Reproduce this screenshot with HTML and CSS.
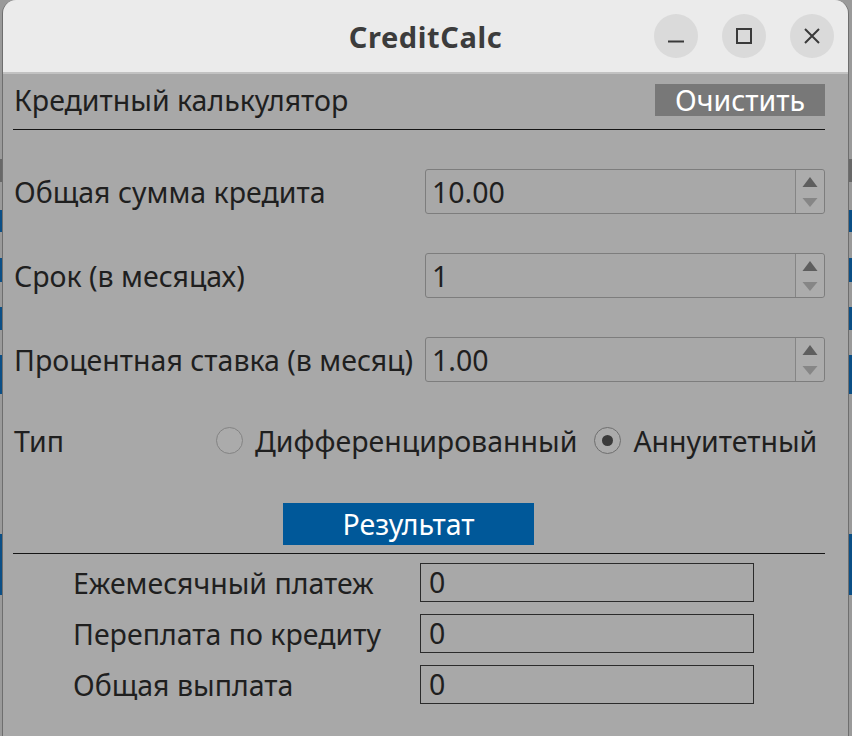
FILE: index.html
```html
<!DOCTYPE html>
<html lang="ru">
<head>
<meta charset="utf-8">
<title>CreditCalc</title>
<link rel="stylesheet" href="styles.css">
</head>
<body>
<div class="window">
  <div class="titlebar">
    <div class="title">CreditCalc</div>
    <div class="controls">
      <div class="wbtn"><svg width="44" height="44" viewBox="0 0 44 44"><line x1="14" y1="27.5" x2="30" y2="27.5" stroke="#3a3a3a" stroke-width="2"/></svg></div>
      <div class="wbtn"><svg width="44" height="44" viewBox="0 0 44 44"><rect x="15" y="15" width="14" height="14" fill="none" stroke="#3a3a3a" stroke-width="2"/></svg></div>
      <div class="wbtn"><svg width="44" height="44" viewBox="0 0 44 44"><path d="M15 15 L29 29 M29 15 L15 29" stroke="#3a3a3a" stroke-width="2" fill="none"/></svg></div>
    </div>
  </div>
  <div class="content">
    <div class="header">
      <span class="htitle">Кредитный калькулятор</span>
      <div class="clear">Очистить</div>
    </div>
    <div class="form">
      <div class="row">
        <span class="label">Общая сумма кредита</span>
        <div class="spin"><span class="val">10.00</span><div class="arrows"><svg width="28" height="43" viewBox="0 0 28 43"><polygon points="6.5,17 21.5,17 14,7" fill="#5e5e5e"/><polygon points="6.5,28 21.5,28 14,37" fill="#868686"/></svg></div></div>
      </div>
      <div class="row">
        <span class="label">Срок (в месяцах)</span>
        <div class="spin"><span class="val">1</span><div class="arrows"><svg width="28" height="43" viewBox="0 0 28 43"><polygon points="6.5,17 21.5,17 14,7" fill="#5e5e5e"/><polygon points="6.5,28 21.5,28 14,37" fill="#868686"/></svg></div></div>
      </div>
      <div class="row">
        <span class="label">Процентная ставка (в месяц)</span>
        <div class="spin"><span class="val">1.00</span><div class="arrows"><svg width="28" height="43" viewBox="0 0 28 43"><polygon points="6.5,17 21.5,17 14,7" fill="#5e5e5e"/><polygon points="6.5,28 21.5,28 14,37" fill="#868686"/></svg></div></div>
      </div>
    </div>
    <div class="typerow">
      <span class="tlabel">Тип</span>
      <span class="radio"></span><span class="rtext">Дифференцированный</span>
      <span class="radio checked"></span><span class="rtext last">Аннуитетный</span>
    </div>
    <div class="resultbar">
      <div class="result">Результат</div>
    </div>
    <div class="results">
      <div class="rrow"><span class="rlabel">Ежемесячный платеж</span><div class="field">0</div></div>
      <div class="rrow"><span class="rlabel">Переплата по кредиту</span><div class="field">0</div></div>
      <div class="rrow"><span class="rlabel">Общая выплата</span><div class="field">0</div></div>
    </div>
  </div>
</div>
</body>
</html>
```

FILE: styles.css
```css
html, body {
  margin: 0;
  padding: 0;
}
body {
  width: 852px;
  height: 736px;
  overflow: hidden;
  font-family: "Noto Sans", "DejaVu Sans", sans-serif;
  color: #1f1f1f;
  background: linear-gradient(to bottom,
    #9a9a9a 0 159px, #686868 159px 182px, #9a9a9a 182px 210px,
    #0b4f86 210px 232px, #9a9a9a 232px 258px,
    #0b4f86 258px 282px, #9a9a9a 282px 307px,
    #0b4f86 307px 330px, #9a9a9a 330px 355px,
    #0b4f86 355px 394px, #9a9a9a 394px 534px,
    #0b4f86 534px 595px, #9a9a9a 595px 736px);
}
.window {
  margin-left: 2px;
  width: 845px;
  height: 736px;
  border-left: 1px solid #6e6e6e;
  border-right: 1px solid #6e6e6e;
  border-radius: 14px 14px 0 0;
  background: #a8a8a8;
  overflow: hidden;
}
.titlebar {
  height: 72px;
  background: #ebebeb;
  border-bottom: 2px solid #c2c2c2;
  display: grid;
  grid-template-columns: 1fr auto 1fr;
  align-items: center;
}
.title {
  grid-column: 2;
  font-weight: bold;
  font-size: 29px;
  color: #3c3c3c;
  letter-spacing: 0.6px;
}
.controls {
  grid-column: 3;
  justify-self: end;
  display: flex;
  gap: 24px;
  padding-right: 14px;
}
.wbtn {
  width: 44px;
  height: 44px;
  border-radius: 50%;
  background: #dadada;
}
.wbtn svg { display: block; }
.content {
  padding: 0 23px 0 10px;
  font-size: 28.5px;
}
.header {
  margin-top: 10px;
  padding-bottom: 13px;
  border-bottom: 1px solid #151515;
  display: flex;
  justify-content: space-between;
  align-items: center;
}
.htitle {
  line-height: 32px;
  padding-left: 1px;
}
.clear {
  width: 170px;
  height: 32px;
  background: #787878;
  color: #ffffff;
  line-height: 32px;
  text-align: center;
}
.form {
  margin-top: 39px;
  display: flex;
  flex-direction: column;
  gap: 39px;
}
.row {
  display: grid;
  grid-template-columns: 412px 1fr;
  align-items: center;
}
.label {
  padding-left: 1px;
  white-space: nowrap;
}
.spin {
  height: 43px;
  border: 1px solid #7d7d7d;
  border-radius: 3px;
  display: flex;
  align-items: center;
}
.val {
  flex: 1;
  padding-left: 6px;
}
.arrows {
  width: 28px;
  height: 43px;
  border-left: 1px solid #858585;
  background: #acacac;
  border-radius: 0 3px 3px 0;
}
.arrows svg { display: block; }
.typerow {
  margin-top: 36px;
  height: 45px;
  display: flex;
  align-items: center;
  white-space: nowrap;
}
.tlabel {
  flex: none;
  width: 202px;
  padding-left: 1px;
}
.radio {
  width: 25px;
  height: 25px;
  border: 1px solid #838383;
  border-radius: 50%;
  background: #ababab;
  margin-right: 12px;
  position: relative;
  flex: none;
}
.radio.checked {
  border-color: #6f6f6f;
}
.radio.checked::after {
  content: "";
  position: absolute;
  left: 7px;
  top: 7px;
  width: 11px;
  height: 11px;
  border-radius: 50%;
  background: #3a3a3a;
}
.rtext {
  flex: none;
  margin-right: 17px;
}
.rtext.last {
  margin-right: 0;
}
.resultbar {
  margin-top: 40px;
  padding-bottom: 8px;
  border-bottom: 1px solid #151515;
}
.result {
  margin-left: 270px;
  width: 251px;
  height: 42px;
  background: #005899;
  color: #ffffff;
  line-height: 42px;
  text-align: center;
}
.results {
  margin-top: 9px;
  padding-left: 60px;
  display: flex;
  flex-direction: column;
  gap: 12px;
}
.rrow {
  display: flex;
  align-items: center;
}
.rlabel {
  width: 347px;
  white-space: nowrap;
}
.field {
  width: 324px;
  height: 37px;
  border: 1px solid #2b2b2b;
  line-height: 37px;
  padding-left: 8px;
}
```
